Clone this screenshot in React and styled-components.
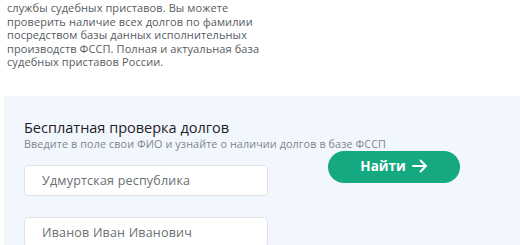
import React from 'react';
import styled, { createGlobalStyle } from 'styled-components';

const Global = createGlobalStyle`
  html, body {
    margin: 0;
    padding: 0;
    background: #ffffff;
    overflow: hidden;
  }
  body {
    font-family: "Open Sans", "Liberation Sans", sans-serif;
  }
`;

const Page = styled.div`
  width: 520px;
  height: 245px;
  overflow: hidden;
`;

const Intro = styled.p`
  margin: 0;
  padding: 1px 0 0 7px;
  width: 258px;
  font-size: 11px;
  line-height: 13.5px;
  color: #555b62;
  letter-spacing: 0.1px;
`;

const Panel = styled.section`
  margin: 27px 0 0 4px;
  padding: 22px 20px 0;
  background: #f2f7fe;
  height: 200px;
`;

const Title = styled.h3`
  margin: 0;
  font-size: 14.5px;
  font-weight: 400;
  color: #1e2227;
  line-height: 19px;
`;

const Subtitle = styled.div`
  margin-top: 0;
  font-size: 10.8px;
  line-height: 14px;
  color: #80868c;
  letter-spacing: 0.1px;
`;

const Form = styled.div`
  display: flex;
  align-items: flex-start;
  gap: 60px;
`;

const Fields = styled.div`
  display: flex;
  flex-direction: column;
  gap: 21px;
  padding-top: 14px;
`;

const Field = styled.div`
  width: 225px;
  height: 29px;
  border: 1px solid #dfe2e6;
  border-radius: 4px;
  background: #ffffff;
  display: flex;
  align-items: center;
  padding-left: 17px;
  font-size: 12.5px;
  color: #6a6f74;
  letter-spacing: 0.2px;
`;

const Button = styled.button`
  margin-top: 0;
  width: 132px;
  height: 32px;
  border: none;
  border-radius: 16px;
  background: #14a981;
  color: #ffffff;
  font-family: "Open Sans", sans-serif;
  font-weight: 700;
  font-size: 13.5px;
  display: flex;
  align-items: center;
  justify-content: center;
  gap: 6px;
  padding: 0 0 2px;
`;

const Arrow = () => (
  <svg width="16" height="14" viewBox="0 0 16 14" fill="none" stroke="#fff" strokeWidth="2" strokeLinecap="round" strokeLinejoin="round">
    <path d="M1 7h13M8.5 1.5 14 7l-5.5 5.5" />
  </svg>
);

export default function App() {
  return (
    <Page>
      <Global />
      <Intro>
        службы судебных приставов. Вы можете проверить наличие всех долгов по фамилии посредством базы данных исполнительных производств ФССП. Полная и актуальная база судебных приставов России.
      </Intro>
      <Panel>
        <Title>Бесплатная проверка долгов</Title>
        <Subtitle>Введите в поле свои ФИО и узнайте о наличии долгов в базе ФССП</Subtitle>
        <Form>
          <Fields>
            <Field>Удмуртская республика</Field>
            <Field>Иванов Иван Иванович</Field>
          </Fields>
          <Button>
            Найти
            <Arrow />
          </Button>
        </Form>
      </Panel>
    </Page>
  );
}
